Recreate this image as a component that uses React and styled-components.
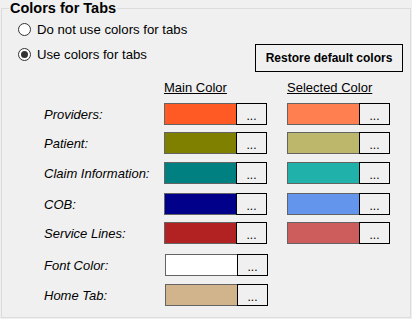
import React from 'react';
import styled, { createGlobalStyle } from 'styled-components';

const GlobalStyle = createGlobalStyle`
    html, body {
        margin: 0;
        padding: 0;
        background: #f0f0f0;
        font-family: "Liberation Sans", Arial, sans-serif;
        color: #000;
    }
`;

const rows = [
    { label: 'Providers:', main: '#ff5a24', selected: '#ff7f50', space: 8 },
    { label: 'Patient:', main: '#808000', selected: '#bdb76b', space: 7 },
    { label: 'Claim Information:', main: '#008080', selected: '#20b2aa', space: 8 },
    { label: 'COB:', main: '#00008b', selected: '#6495ed', space: 9 },
    { label: 'Service Lines:', main: '#b22222', selected: '#cd5c5c', space: 7 },
    { label: 'Font Color:', main: '#ffffff', space: 10 },
    { label: 'Home Tab:', main: '#d2b48c', space: 8 },
];

function Radio({ checked, children }) {
    return (
        <RadioRow>
            <RadioCircle>{checked && <RadioDot />}</RadioCircle>
            <span>{children}</span>
        </RadioRow>
    );
}

function ColorPicker({ color }) {
    return (
        <Picker>
            <Swatch $color={color} />
            <PickButton>...</PickButton>
        </Picker>
    );
}

function App() {
    return (
        <>
            <GlobalStyle />
            <GroupBox>
                <Legend>Colors for Tabs</Legend>
                <TopSection>
                    <RadioColumn>
                        <Radio>Do not use colors for tabs</Radio>
                        <Radio checked>Use colors for tabs</Radio>
                    </RadioColumn>
                    <RestoreButton>Restore default colors</RestoreButton>
                </TopSection>
                <HeaderRow>
                    <LabelCell />
                    <HeaderCell>Main Color</HeaderCell>
                    <HeaderCell>Selected Color</HeaderCell>
                </HeaderRow>
                {rows.map((r) => (
                    <ColorRow key={r.label} $space={r.space}>
                        <LabelCell>{r.label}</LabelCell>
                        <PickerCell>
                            <ColorPicker color={r.main} />
                        </PickerCell>
                        {r.selected && (
                            <PickerCell>
                                <ColorPicker color={r.selected} />
                            </PickerCell>
                        )}
                    </ColorRow>
                ))}
            </GroupBox>
        </>
    );
}

export default App;

const GroupBox = styled.fieldset`
    margin: 0 0 0 1px;
    padding: 0;
    width: 410px;
    height: 318px;
    box-sizing: border-box;
    border: 1px solid #dcdcdc;
    min-inline-size: 0;
`;

const Legend = styled.legend`
    margin-left: 7px;
    padding: 0 1px;
    font-size: 14.5px;
    font-weight: bold;
    line-height: 16px;
`;

const TopSection = styled.div`
    display: flex;
    justify-content: space-between;
    align-items: flex-start;
    padding: 6px 7px 0 16px;
`;

const RadioColumn = styled.div`
    display: flex;
    flex-direction: column;
    gap: 10px;
`;

const RadioRow = styled.label`
    display: flex;
    align-items: center;
    gap: 6px;
    font-size: 13.2px;
    line-height: 15px;
`;

const RadioCircle = styled.span`
    display: flex;
    align-items: center;
    justify-content: center;
    width: 13px;
    height: 13px;
    box-sizing: border-box;
    border: 1px solid #333;
    border-radius: 50%;
    background: #fff;
`;

const RadioDot = styled.span`
    width: 7px;
    height: 7px;
    border-radius: 50%;
    background: #333;
`;

const RestoreButton = styled.button`
    margin-top: 22px;
    width: 148px;
    height: 28px;
    padding: 0;
    border: 1px solid #000;
    background: #f0f0f0;
    font-family: "Liberation Sans", Arial, sans-serif;
    font-size: 12px;
    font-weight: bold;
    color: #000;
`;

const HeaderRow = styled.div`
    display: flex;
    margin-top: 8px;
    padding-left: 42px;
    font-size: 13px;
    line-height: 15px;
`;

const ColorRow = styled.div`
    display: flex;
    align-items: center;
    height: 22px;
    margin-top: ${(p) => p.$space}px;
    padding-left: 42px;
`;

const LabelCell = styled.div`
    width: 121px;
    font-size: 13px;
    font-style: italic;
    line-height: 15px;
`;

const HeaderCell = styled.div`
    width: 124px;
    text-decoration: underline;
`;

const PickerCell = styled.div`
    width: 124px;
`;

const Picker = styled.div`
    display: flex;
    height: 22px;
`;

const Swatch = styled.div`
    width: 72px;
    height: 22px;
    box-sizing: border-box;
    border: 1px solid #646464;
    border-right: none;
    background: ${(p) => p.$color};
`;

const PickButton = styled.button`
    display: flex;
    align-items: center;
    justify-content: center;
    width: 31px;
    height: 22px;
    box-sizing: border-box;
    padding: 4px 0 0;
    border: 1px solid #000;
    background: #f0f0f0;
    font-family: "Liberation Sans", Arial, sans-serif;
    font-size: 12px;
    color: #000;
`;
